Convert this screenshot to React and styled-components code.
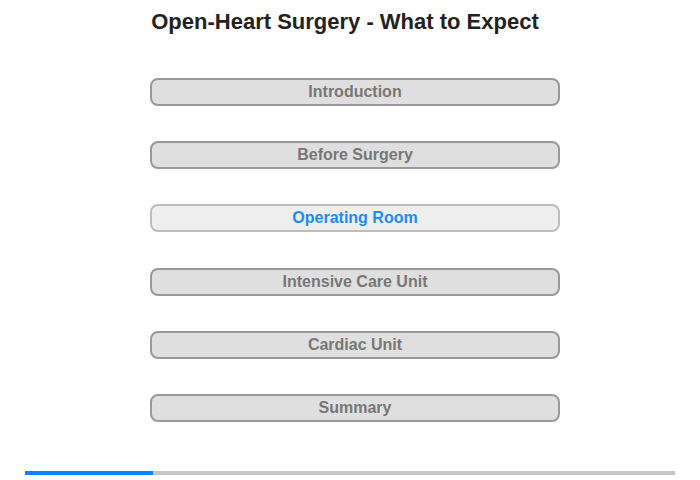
import React from "react"
import styled, { createGlobalStyle } from "styled-components"

const sections = [
  `Introduction`,
  `Before Surgery`,
  `Operating Room`,
  `Intensive Care Unit`,
  `Cardiac Unit`,
  `Summary`,
]

export default function App() {
  const current = 2
  const progress = 0.197

  return (
    <>
      <GlobalStyle />
      <Page>
        <Title>Open-Heart Surgery - What to Expect</Title>
        <Menu>
          {sections.map((name, i) => (
            <MenuButton key={name} $active={i === current}>
              {name}
            </MenuButton>
          ))}
        </Menu>
        <ProgressTrack>
          <ProgressFill style={{ width: `${progress * 100}%` }} />
        </ProgressTrack>
      </Page>
    </>
  )
}

// --- styled components ---

const GlobalStyle = createGlobalStyle`
  body {
    margin: 0;
    background: #fff;
    font-family: "Liberation Sans", Arial, sans-serif;
  }
`

const Page = styled.div`
  width: 700px;
  height: 480px;
  display: flex;
  flex-direction: column;
  box-sizing: border-box;
  padding-top: 10px;
`

const Title = styled.h1`
  margin: 0;
  padding-right: 10px;
  text-align: center;
  font-size: 22px;
  line-height: 24px;
  font-weight: bold;
  color: #222;
`

const Menu = styled.div`
  display: flex;
  flex-direction: column;
  gap: 35.2px;
  margin-top: 44px;
  margin-left: 150px;
  width: 410px;
`

const MenuButton = styled.div`
  box-sizing: border-box;
  height: 28px;
  border-radius: 8px;
  border: 2px solid ${p => (p.$active ? "#bdbdbd" : "#999")};
  background: ${p => (p.$active ? "#eee" : "#dfdfdf")};
  color: ${p => (p.$active ? "#1a8cff" : "#777")};
  font-size: 16px;
  font-weight: bold;
  line-height: 24px;
  text-align: center;
  cursor: pointer;
`

const ProgressTrack = styled.div`
  margin: auto 25px 5px;
  height: 4px;
  background: #c6c6c6;
`

const ProgressFill = styled.div`
  height: 100%;
  background: #0a84ff;
`
